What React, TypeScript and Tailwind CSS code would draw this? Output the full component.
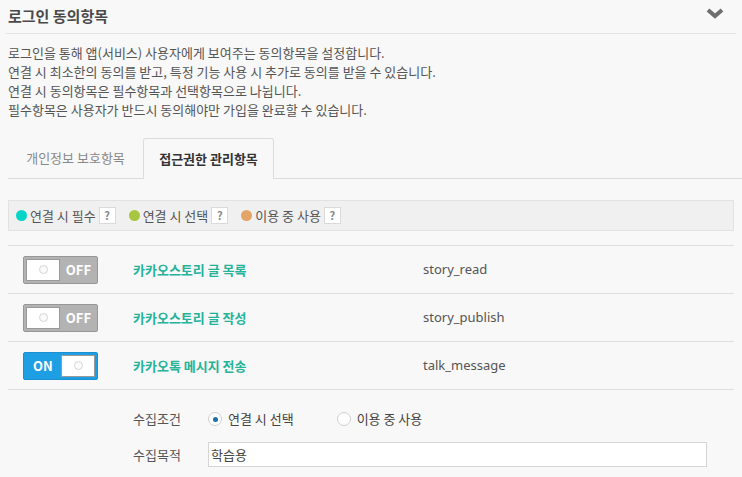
const font = "font-['Noto_Sans_CJK_KR','Noto_Sans',sans-serif]"

const legend = [
  { color: 'bg-[#05d5c6]', text: '연결 시 필수' },
  { color: 'bg-[#a9c640]', text: '연결 시 선택' },
  { color: 'bg-[#e2a467]', text: '이용 중 사용' },
]

const scopes = [
  { on: false, name: '카카오스토리 글 목록', id: 'story_read' },
  { on: false, name: '카카오스토리 글 작성', id: 'story_publish' },
  { on: true, name: '카카오톡 메시지 전송', id: 'talk_message' },
]

const Knob = () => (
  <span className="flex items-center justify-center w-[34px] h-[22px] bg-white border border-[#9a9a9a]">
    <span className="w-[9px] h-[9px] rounded-full border border-[#d6d6d6] bg-[#fafafa]" />
  </span>
)

const Toggle = ({ on }: { on: boolean }) =>
  on ? (
    <div className="flex items-center justify-between w-[75px] h-[28px] pl-[9px] pr-[2px] bg-[#1e9fe4] border border-[#1b8fd0] rounded-[2px]">
      <span className="text-white text-[13px] font-bold leading-none">ON</span>
      <Knob />
    </div>
  ) : (
    <div className="flex items-center justify-between w-[75px] h-[28px] pl-[2px] pr-[6px] bg-[#b3b3b3] border border-[#979797] rounded-[2px]">
      <Knob />
      <span className="text-white text-[13px] font-bold leading-none">OFF</span>
    </div>
  )

const Radio = ({ checked, label }: { checked: boolean; label: string }) => (
  <label className="flex items-center gap-[6px]">
    <span className="flex items-center justify-center w-[14px] h-[14px] rounded-full border border-[#cfcfcf] bg-white">
      {checked && <span className="w-[5px] h-[5px] rounded-full bg-[#1b6fa8]" />}
    </span>
    <span className="text-[13px] text-[#444]">{label}</span>
  </label>
)

export default function App() {
  return (
    <div className={`w-[742px] h-[477px] overflow-hidden bg-[#f8f8f8] text-[#555] ${font}`}>
      <header className="flex items-center justify-between h-[34px] mx-[6px] pl-[2px] pr-[12px] border-b border-[#e3e3e3]">
        <h1 className="text-[15px] font-bold text-[#4a4a4a]">로그인 동의항목</h1>
        <svg width="18" height="12" viewBox="0 0 18 12" className="-mt-[8px]">
          <path d="M2 3 L9 9 L16 3" stroke="#6e6e6e" strokeWidth="4" fill="none" strokeLinejoin="miter" />
        </svg>
      </header>

      <div className="px-[8px] pt-[9px] text-[13px] leading-[19px] text-[#555]">
        <p>로그인을 통해 앱(서비스) 사용자에게 보여주는 동의항목을 설정합니다.</p>
        <p>연결 시 최소한의 동의를 받고, 특정 기능 사용 시 추가로 동의를 받을 수 있습니다.</p>
        <p>연결 시 동의항목은 필수항목과 선택항목으로 나뉩니다.</p>
        <p>필수항목은 사용자가 반드시 동의해야만 가입을 완료할 수 있습니다.</p>
      </div>

      <nav className="flex items-end ml-[8px] mt-[19px] h-[41px] border-b border-[#dcdcdc] text-[13px]">
        <div className="w-[135px] h-[40px] flex items-center justify-center text-[#888]">개인정보 보호항목</div>
        <div className="w-[131px] h-[41px] -mb-px flex items-center justify-center bg-[#f8f8f8] border border-b-0 border-[#dcdcdc] rounded-t-[3px] font-bold text-[#333]">
          접근권한 관리항목
        </div>
      </nav>

      <div className="flex items-center gap-[13px] mx-[8px] mt-[21px] h-[31px] pl-[7px] bg-[#f0f0f0] border border-[#e2e2e2]">
        {legend.map(({ color, text }) => (
          <div key={text} className="flex items-center">
            <span className={`w-[11px] h-[11px] rounded-full ${color}`} />
            <span className="ml-[3px] text-[13px] text-[#555]">{text}</span>
            <span className="ml-[3px] flex items-center justify-center w-[17px] h-[17px] bg-white border border-[#dadada] text-[11px] text-[#888] font-bold">?</span>
          </div>
        ))}
      </div>

      <div className="mx-[8px] mt-[14px] border-t border-[#dedede]">
        {scopes.map(({ on, name, id }) => (
          <div key={id} className="flex items-center h-[48px] border-b border-[#dedede]">
            <div className="w-[125px] pl-[15px]">
              <Toggle on={on} />
            </div>
            <div className="w-[290px] text-[13px] font-bold text-[#25b39a]">{name}</div>
            <div className="text-[13px] text-[#555] font-['Noto_Sans',sans-serif]">{id}</div>
          </div>
        ))}
      </div>

      <div className="ml-[133px] mt-[18px] flex flex-col gap-[12px] text-[13px]">
        <div className="flex items-center h-[22px]">
          <span className="w-[75px] text-[#555]">수집조건</span>
          <div className="flex items-center gap-[43px]">
            <Radio checked label="연결 시 선택" />
            <Radio checked={false} label="이용 중 사용" />
          </div>
        </div>
        <div className="flex items-center">
          <span className="w-[75px] text-[#555]">수집목적</span>
          <div className="w-[499px] h-[25px] px-[2px] flex items-center bg-white border border-[#d5d5d5] text-[#444]">학습용</div>
        </div>
      </div>
    </div>
  )
}
